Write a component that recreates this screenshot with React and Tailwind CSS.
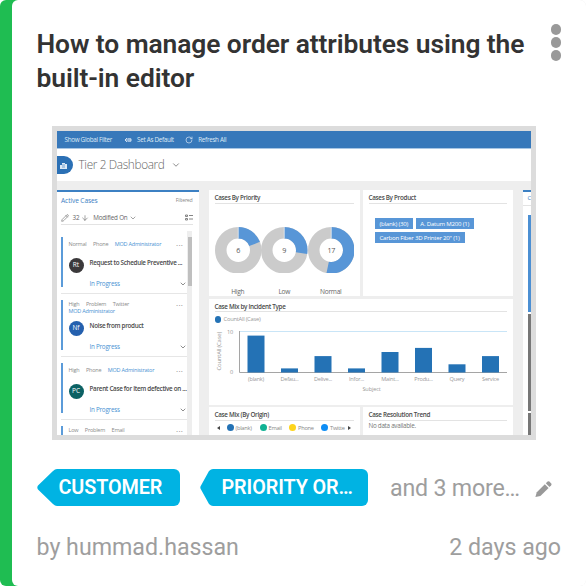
import { ArrowDown, ChevronDown, Pencil, RotateCw } from "lucide-react"

const cases = [
    {
        tags: ['Normal', 'Phone'],
        owner: 'MOD Administrator',
        initials: 'Rt',
        color: 'bg-[#3b393b]',
        title: 'Request to Schedule Preventive ...',
    },
    {
        tags: ['High', 'Problem', 'Twitter'],
        owner: 'MOD Administrator',
        ownerBelow: true,
        initials: 'Nf',
        color: 'bg-[#2460ae]',
        title: 'Noise from product',
    },
    {
        tags: ['High', 'Phone'],
        owner: 'MOD Administrator',
        initials: 'PC',
        color: 'bg-[#0b6164]',
        title: 'Parent Case for Item defective on ...',
    },
    {
        tags: ['Low', 'Problem', 'Email'],
        ownerBelow: true,
    },
]

const priorities = [
    { label: 'High', value: 6, share: 0.19 },
    { label: 'Low', value: 9, share: 0.275 },
    { label: 'Normal', value: 17, share: 0.53 },
]

const incidents = [
    { label: '(blank)', value: 9 },
    { label: 'Defau...', value: 1 },
    { label: 'Delive...', value: 4 },
    { label: 'Infor...', value: 1 },
    { label: 'Maint...', value: 5 },
    { label: 'Produ...', value: 6 },
    { label: 'Query', value: 2 },
    { label: 'Service', value: 4 },
]

const origins = [
    { label: '(blank)', color: 'bg-[#2472b5]', width: 'w-[33px]' },
    { label: 'Email', color: 'bg-[#12b294]', width: 'w-[29.5px]' },
    { label: 'Phone', color: 'bg-[#fdd41c]', width: 'w-[32px]' },
    { label: 'Twitte', color: 'bg-[#0d8df5]', width: 'w-[25px]' },
]

function Tag({ children, tip, className }) {
    return (
        <div className={`flex h-[37px] ${className}`}>
            <svg width={tip + 1} height="37" className="-mr-px shrink-0" fill="#00b3e3">
                <path d={`M${tip + 1} 0H${tip}Q${tip - 2} 0 ${tip - 4} 2L1 16.5Q-0.4 18.5 1 20.5L${tip - 4} 35Q${tip - 2} 37 ${tip} 37H${tip + 1}Z`} />
            </svg>
            <div className="flex flex-1 items-center rounded-r-[6px] bg-[#00b3e3] pt-px font-semibold text-[19.8px] tracking-[-0.1px] text-white whitespace-nowrap">
                {children}
            </div>
        </div>
    )
}

function CaseItem({ item }) {
    return (
        <div className="h-[63px] shrink-0 border-b border-[#e6e6e6] pt-[6px]">
            <div className="h-[50px] border-l-2 border-[#5b9bd9] pl-[5.5px]">
                <div className={`flex h-[14px] text-[5.5px] leading-[6.5px] tracking-[-0.22px] text-[#8b8b8b] whitespace-nowrap ${item.ownerBelow ? 'pt-[1px]' : 'pt-[4px]'}`}>
                    <div>
                        <div className="flex gap-[6.5px]">
                            {item.tags.map(tag => <span key={tag}>{tag}</span>)}
                            {!item.ownerBelow && <span className="text-[#4a92d3]">{item.owner}</span>}
                        </div>
                        {item.ownerBelow && <div className="text-[#4a92d3]">{item.owner}</div>}
                    </div>
                    <span className="ml-auto mr-[4px] -mt-px text-[8px] tracking-[0.2px]">...</span>
                </div>
                {item.title && (
                    <>
                        <div className="flex gap-[6px] pt-[6.5px]">
                            <div className={`flex h-[15px] w-[15px] shrink-0 items-center justify-center rounded-full text-[6.5px] text-white ${item.color}`}>
                                {item.initials}
                            </div>
                            <div className="whitespace-nowrap text-[6.3px] font-semibold leading-[10px] tracking-[-0.3px] text-[#4a4a4a]">
                                {item.title}
                            </div>
                        </div>
                        <div className="flex items-center pl-[21px] pt-[6px] text-[6.3px] leading-[10px] tracking-[-0.25px] text-[#4a92d3]">
                            In Progress
                            <ChevronDown className="ml-auto h-[8px] w-[8px] text-[#777]" strokeWidth={2.5} />
                        </div>
                    </>
                )}
            </div>
        </div>
    )
}

function Panel({ title, className, children }) {
    return (
        <div className={`bg-white px-[6px] ${className}`}>
            <h3 className="h-[13.5px] border-b border-[#e3e3e3] pt-[3px] text-[6.3px] font-semibold leading-[9px] tracking-[-0.3px] text-[#4a4a4a] whitespace-nowrap">{title}</h3>
            {children}
        </div>
    )
}

function Donut({ label, value, share }) {
    const length = 2 * Math.PI * 17.5
    return (
        <div className="w-[46.5px] text-center text-[6.6px] leading-[9px] tracking-[-0.3px] text-[#666]">
            <svg width="46.5" height="46.5" viewBox="0 0 46.5 46.5">
                <g fill="none" strokeWidth="11.5" transform="rotate(-90 23.25 23.25)">
                    <circle cx="23.25" cy="23.25" r="17.5" stroke="#cbcbcb" />
                    <circle cx="23.25" cy="23.25" r="17.5" stroke="#5896d7" strokeDasharray={`${length * share} ${length}`} />
                </g>
                <path d="M23.25 0v11.5" stroke="#fff" strokeWidth="0.6" />
                <text x="23.25" y="25.8" textAnchor="middle" fontSize="7.2" fill="#555">{value}</text>
            </svg>
            <div className="pt-[14px]">{label}</div>
        </div>
    )
}

function IncidentChart() {
    return (
        <svg width="292" height="76" className="block tracking-[-0.25px]">
            <g fontSize="5.6" fill="#999">
                <text transform="translate(5.5 58.5) rotate(-90)" fontSize="6">CountAll (Case)</text>
                <text x="18" y="21.5" textAnchor="end">10</text>
                <text x="18" y="62" textAnchor="end">0</text>
                <path d="M24.5 19.5H292.5" stroke="#c9e5f7" />
                <path d="M24.5 19V60.5H292.5" stroke="#a5a5a5" fill="none" />
                {incidents.map((item, i) => (
                    <g key={item.label}>
                        <rect x={32.5 + i * 33.5} y={60.5 - item.value * 4.1} width="17" height={item.value * 4.1} fill="#2472b5" />
                        <text x={41 + i * 33.5} y="69" textAnchor="middle">{item.label}</text>
                    </g>
                ))}
            </g>
        </svg>
    )
}

function Dashboard() {
    return (
        <div className="flex h-[314px] w-[484px] flex-col overflow-hidden border-5 border-[#dcdcdc] bg-[#eeeeee] font-['Open_Sans',sans-serif]">
            <div className="flex h-[18px] shrink-0 items-center border-b border-[#a8c6e4] bg-[#3778ba] pl-[7.5px] text-[6.3px] tracking-[-0.3px] text-[#dce9f6]">
                <span>Show Global Filter</span>
                <svg width="8" height="6" viewBox="0 0 8 6" className="ml-[12px]" fill="none" stroke="currentColor" strokeWidth="0.9">
                    <path d="M3 1L1 3L3 5M1 3h6M3.5 1.8h3.5v2.4h-3.5" />
                </svg>
                <span className="ml-[5px]">Set As Default</span>
                <RotateCw className="ml-[11px] h-[8px] w-[8px]" />
                <span className="ml-[5.5px]">Refresh All</span>
            </div>
            <div className="flex h-[32px] shrink-0 items-center bg-white text-[#666]">
                <div className="flex h-[18px] w-[15.5px] items-center justify-center rounded-r-full bg-[#2b70b5] pr-[2px]">
                    <svg width="7" height="7" viewBox="0 0 7 7" fill="#dce9f6">
                        <path d="M0 3h2V1h3v1h2v5H0Z" />
                        <path d="M2 3h3M2 5h3" stroke="#2b70b5" strokeWidth="0.6" />
                    </svg>
                </div>
                <span className="ml-[6px] text-[11.8px] font-light tracking-[-0.35px]">Tier 2 Dashboard</span>
                <ChevronDown className="ml-[6px] h-[10px] w-[10px]" strokeWidth={1.8} />
            </div>
            <div className="flex min-h-0 flex-1 pt-[9px]">
                <div className="flex w-[141.5px] shrink-0 flex-col border-t-2 border-[#3c80c3] bg-white pl-[4px] pr-[6px]">
                    <div className="flex h-[16px] shrink-0 items-center justify-between pt-[2px]">
                        <span className="text-[6.6px] tracking-[-0.1px] text-[#3c80c3]">Active Cases</span>
                        <span className="text-[5.2px] tracking-[-0.2px] text-[#888]">Filtered</span>
                    </div>
                    <div className="flex h-[17px] shrink-0 items-center border-b border-[#e3e3e3] pt-[3px] text-[6.3px] tracking-[-0.2px] text-[#666]">
                        <Pencil className="h-[8px] w-[8px]" strokeWidth={1.8} />
                        <span className="ml-[3.5px]">32</span>
                        <ArrowDown className="ml-[2px] h-[8px] w-[8px]" strokeWidth={1.8} />
                        <span className="ml-[4px]">Modified On</span>
                        <ChevronDown className="ml-[1px] h-[8px] w-[8px]" strokeWidth={1.8} />
                        <svg width="8" height="7" className="ml-auto" stroke="#777" fill="none" strokeWidth="0.9">
                            <path d="M0.5 1h2v1.5h-2zM4 1.5h4M0.5 4.5h2v1.5h-2zM4 5h4" />
                        </svg>
                    </div>
                    <div className="flex min-h-0 flex-1 overflow-hidden pt-[6px]">
                        <div className="flex w-[126px] flex-col">
                            {cases.map(item => <CaseItem key={item.tags.join() + item.initials} item={item} />)}
                        </div>
                        <div className="w-[5px] bg-[#eeeeee] pt-[6px]">
                            <div className="ml-[0.5px] h-[49px] w-[4px] bg-[#bfbfbf]" />
                        </div>
                    </div>
                </div>
                <div className="ml-[10px] flex w-[304px] shrink-0 flex-col gap-[2.5px]">
                    <div className="flex gap-[3px]">
                        <Panel title="Cases By Priority" className="h-[106px] w-[151px]">
                            <div className="flex pt-[23px]">
                                {priorities.map(item => <Donut key={item.label} {...item} />)}
                            </div>
                        </Panel>
                        <Panel title="Cases By Product" className="h-[106px] w-[150px]">
                            <div className="flex flex-wrap gap-x-[2.5px] gap-y-[3px] pl-[6px] pt-[14px] text-[6.1px] leading-[11px] tracking-[-0.22px] text-white whitespace-nowrap">
                                <span className="w-[38.5px] bg-[#5896d7] text-center">(blank) (30)</span>
                                <span className="w-[58.5px] bg-[#5896d7] text-center">A. Datum M200 (1)</span>
                                <span className="w-[90px] bg-[#5896d7] text-center">Carbon Fiber 3D Printer 20" (1)</span>
                            </div>
                        </Panel>
                    </div>
                    <Panel title="Case Mix by Incident Type" className="h-[106px]">
                        <div className="flex h-[11px] items-center gap-[2.5px] pt-[4px] text-[5.8px] tracking-[-0.25px] text-[#999]">
                            <span className="h-[6.5px] w-[6.5px] rounded-full bg-[#2472b5]" />
                            CountAll (Case)
                        </div>
                        <div className="-mt-[11px]">
                            <IncidentChart />
                        </div>
                        <div className="-mt-[3.5px] pl-[22px] text-center text-[5.6px] leading-[8px] tracking-[-0.15px] text-[#999]">Subject</div>
                    </Panel>
                    <div className="flex gap-[3px]">
                        <Panel title="Case Mix (By Origin)" className="h-[28px] w-[151px]">
                            <div className="flex h-[15px] items-center pl-[2px] text-[5.7px] tracking-[-0.25px] text-[#888]">
                                <span className="mr-[7px] h-0 w-0 border-y-[2px] border-r-[3.5px] border-y-transparent border-r-[#444]" />
                                {origins.map(item => (
                                    <span key={item.label} className={`flex items-center gap-[2px] ${item.width}`}>
                                        <span className={`h-[7px] w-[7px] shrink-0 rounded-full ${item.color}`} />
                                        {item.label}
                                    </span>
                                ))}
                                <span className="ml-[2px] h-0 w-0 border-y-[2px] border-l-[3.5px] border-y-transparent border-l-[#444]" />
                            </div>
                        </Panel>
                        <Panel title="Case Resolution Trend" className="h-[28px] w-[150px]">
                            <p className="text-[6.3px] leading-[9px] tracking-[-0.28px] text-[#777]">No data available.</p>
                        </Panel>
                    </div>
                </div>
                <div className="ml-[10px] flex flex-1 flex-col border-t-2 border-[#3c80c3] bg-white">
                    <div className="h-[14px] shrink-0 border-b border-[#e3e3e3] pl-[5px] text-[6px] leading-[13px] text-[#3c80c3]">C</div>
                    <div className="mt-[9px] flex w-[3px] flex-1 flex-col gap-[2px] self-end">
                        <div className="h-[97px] shrink-0 bg-[#4b8fd3]" />
                        <div className="h-[97px] shrink-0 bg-[#777]" />
                        <div className="flex-1 bg-[#777]" />
                    </div>
                </div>
            </div>
        </div>
    )
}

export default function App() {
    return (
        <div className="h-[586px] w-[586px] overflow-hidden rounded-[6px] bg-[linear-gradient(to_right,#1fbd52_24px,#f1f1f1_24px)] pl-[11.5px] font-['Roboto',sans-serif]">
            <div className="flex h-full flex-col rounded-[6px] bg-white pl-[25px] pr-[25px] pt-[27px] text-[#9e9e9e]">
                <div className="flex h-[99px] items-start justify-between">
                    <h2 className="whitespace-nowrap text-[26.4px] font-semibold leading-[34px] tracking-[-0.08px] text-[#333]">
                        How to manage order attributes using the<br />built-in editor
                    </h2>
                    <div className="-mt-[3px] flex flex-col gap-[2.7px]">
                        <span className="h-[10.5px] w-[10.5px] rounded-full bg-[#999]" />
                        <span className="h-[10.5px] w-[10.5px] rounded-full bg-[#999]" />
                        <span className="h-[10.5px] w-[10.5px] rounded-full bg-[#999]" />
                    </div>
                </div>
                <div className="pl-[15.5px]">
                    <Dashboard />
                </div>
                <div className="mt-[29px] flex h-[37px] items-center text-[23.2px] whitespace-nowrap">
                    <Tag tip={20} className="w-[143.5px]"><span className="pl-[2px]">CUSTOMER</span></Tag>
                    <Tag tip={13} className="ml-[19.5px] w-[168.5px]"><span className="pl-[9px]">PRIORITY OR…</span></Tag>
                    <span className="ml-[22px] w-[130px] pt-px tracking-[-0.2px]">and 3 more…</span>
                    <svg width="18" height="18" className="ml-[15px] mt-[3px] shrink-0" fill="#999">
                        <path d="M0.4 17L1.8 12.2L9.8 4.2L13.6 8L5.4 16Z" />
                        <path d="M10.8 3.2L12.6 1.5Q13.5 0.8 14.4 1.6L16.2 3.4Q17 4.3 16.2 5.2L14.5 7Z" />
                    </svg>
                </div>
                <div className="mt-[24px] flex items-center justify-between text-[23.2px] leading-[34px]">
                    <span>by hummad.hassan</span>
                    <span>2 days ago</span>
                </div>
            </div>
        </div>
    )
}
